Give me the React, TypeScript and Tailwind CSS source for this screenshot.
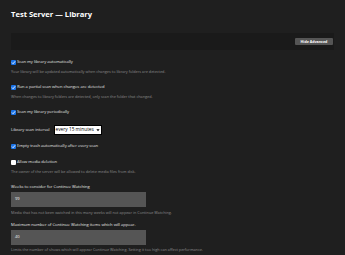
import React from "react"

const font = { fontFamily: '"Open Sans", "Liberation Sans", sans-serif' }

function Check({ checked }: { checked: boolean }) {
  return checked ? (
    <span className="flex h-[5px] w-[5px] shrink-0 items-center justify-center rounded-[1px] bg-[#1a73e8]">
      <svg viewBox="0 0 10 10" className="h-[5px] w-[5px]">
        <path d="M2 5.2 L4.2 7.4 L8.2 2.6" fill="none" stroke="#fff" strokeWidth="1.8" />
      </svg>
    </span>
  ) : (
    <span className="h-[5px] w-[5px] shrink-0 rounded-[1px] bg-white" />
  )
}

function Row({ checked, label, className = "" }: { checked: boolean; label: string; className?: string }) {
  return (
    <div className={`flex h-[6px] items-center gap-[1px] text-[4.1px] leading-[6px] text-[#e5e5e5] whitespace-nowrap ${className}`}>
      <Check checked={checked} />
      <span>{label}</span>
    </div>
  )
}

function Desc({ text, className = "" }: { text: string; className?: string }) {
  return <p className={`h-[6px] text-[3.8px] leading-[6px] text-[#8c8c8c] whitespace-nowrap ${className}`}>{text}</p>
}

export default function App() {
  return (
    <div className="h-[255px] w-[345px] overflow-hidden bg-[#1f1f1f] px-[11px] pt-[9px]" style={font}>
      <h1 className="h-[10px] text-[7.6px] font-bold leading-[10px] text-white">Test Server — Library</h1>

      <div className="mt-[14px] flex h-[17px] items-center justify-end bg-[#1a1a1a] pr-[1px]">
        <button className="h-[7px] w-[38px] whitespace-nowrap rounded-[1px] bg-[#555] text-[3.6px] font-bold leading-[7px] text-white">
          Hide Advanced
        </button>
      </div>

      <Row checked label="Scan my library automatically" className="mt-[9px]" />
      <Desc text="Your library will be updated automatically when changes to library folders are detected." className="mt-[4px]" />

      <Row checked label="Run a partial scan when changes are detected" className="mt-[9px]" />
      <Desc text="When changes to library folders are detected, only scan the folder that changed." className="mt-[4px]" />

      <Row checked label="Scan my library periodically" className="mt-[9px]" />

      <div className="mt-[10px] flex h-[10px] items-center gap-[4px]">
        <span className="whitespace-nowrap text-[4.1px] text-[#e5e5e5]">Library scan interval</span>
        <div className="flex h-[10px] w-[48px] items-center justify-between border border-black bg-white px-[1px] text-[4.8px] text-black">
          <span className="whitespace-nowrap">every 15 minutes</span>
          <svg viewBox="0 0 10 10" className="h-[4px] w-[4px] shrink-0">
            <path d="M1 3 L5 8 L9 3 Z" fill="#000" />
          </svg>
        </div>
      </div>

      <Row checked label="Empty trash automatically after every scan" className="mt-[8px]" />

      <Row checked={false} label="Allow media deletion" className="mt-[10px]" />
      <Desc text="The owner of the server will be allowed to delete media files from disk." className="mt-[4px]" />

      <p className="mt-[9px] h-[6px] whitespace-nowrap text-[4.1px] leading-[6px] text-[#e5e5e5]">Weeks to consider for Continue Watching</p>
      <div className="mt-[2px] flex h-[15px] w-[135px] items-center bg-[#555] px-[4px] text-[4.1px] text-[#eee]">99</div>
      <Desc text="Media that has not been watched in this many weeks will not appear in Continue Watching." className="mt-[3px]" />

      <p className="mt-[6px] h-[6px] whitespace-nowrap text-[4.1px] leading-[6px] text-[#e5e5e5]">Maximum number of Continue Watching items which will appear.</p>
      <div className="mt-[2px] flex h-[15px] w-[135px] items-center bg-[#555] px-[4px] text-[4.1px] text-[#eee]">40</div>
      <Desc text="Limits the number of shows which will appear Continue Watching. Setting it too high can affect performance." className="mt-[2px]" />
    </div>
  )
}
